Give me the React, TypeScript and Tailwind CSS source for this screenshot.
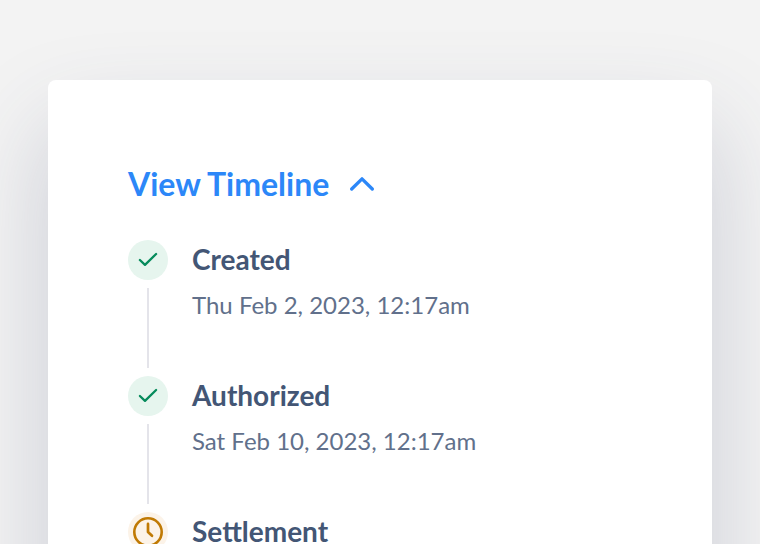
import React from "react";

type Step = { title: string; date?: string; status: "done" | "pending" };

const steps: Step[] = [
  { title: "Created", date: "Thu Feb 2, 2023, 12:17am", status: "done" },
  { title: "Authorized", date: "Sat Feb 10, 2023, 12:17am", status: "done" },
  { title: "Settlement", status: "pending" },
];

function StatusIcon({ status }: { status: Step["status"] }) {
  if (status === "done") {
    return (
      <svg className="size-10 shrink-0" viewBox="0 0 40 40" fill="none">
        <circle cx="20" cy="20" r="20" fill="#e6f5ee" />
        <path d="M11.9 20L17 24.9L28.1 14" stroke="#068b5c" strokeWidth="2.3" strokeLinecap="round" strokeLinejoin="round" />
      </svg>
    );
  }
  return (
    <svg className="size-10 shrink-0" viewBox="0 0 40 40" fill="none">
      <circle cx="20" cy="20" r="20" fill="#fcf3e8" />
      <circle cx="20" cy="20" r="13.7" stroke="#c07a04" strokeWidth="2.6" />
      <path d="M20 11.9V20L24 23.8" stroke="#c07a04" strokeWidth="2.7" strokeLinecap="round" strokeLinejoin="round" />
    </svg>
  );
}

function TimelineStep({ step }: { step: Step }) {
  return (
    <li className="flex h-[136px] gap-6">
      <div className="flex flex-col items-center gap-2">
        <StatusIcon status={step.status} />
        <div className="h-20 w-0.5 bg-[#e4e4ea]" />
      </div>
      <div className="whitespace-nowrap">
        <h3 className="text-[28px] leading-[38px] font-bold text-[#435675]">{step.title}</h3>
        <p className="mt-[7px] text-[24px] leading-10 text-[#61708b]">{step.date}</p>
      </div>
    </li>
  );
}

export default function App() {
  return (
    <main className="h-[544px] overflow-hidden bg-[#f3f3f3] px-12 pt-20 font-[Lato,sans-serif]">
      <section className="h-[720px] rounded-lg bg-white px-20 pt-20 shadow-[0_48px_96px_rgba(60,70,110,0.22)]">
        <button className="flex h-12 items-center gap-[21px] text-[32px] leading-12 font-bold text-[#2c87f8]">
          <span>View Timeline</span>
          <svg className="h-4 w-6" viewBox="0 0 24 16" fill="none">
            <path d="M1.7 13L12 2.8L22.3 13" stroke="currentColor" strokeWidth="3.3" strokeLinecap="round" strokeLinejoin="round" />
          </svg>
        </button>
        <ol className="mt-8">
          {steps.map((step) => <TimelineStep key={step.title} step={step} />)}
        </ol>
      </section>
    </main>
  );
}
